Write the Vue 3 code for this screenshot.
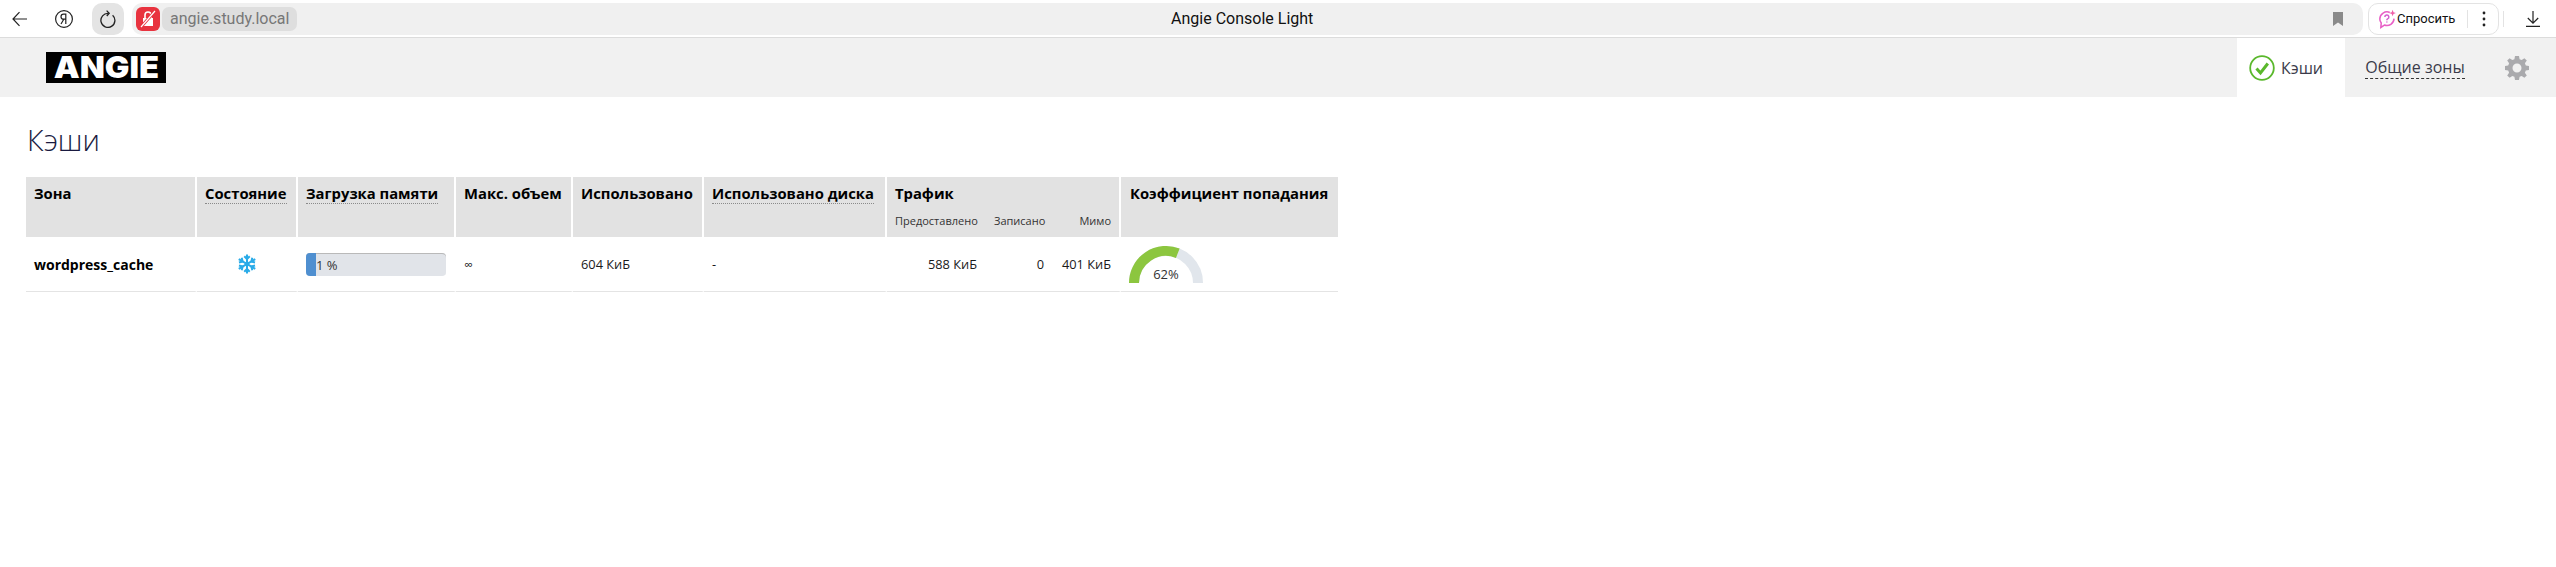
<script setup>
const hitPercent = 62;
const gaugeRadius = 32;
const angle = Math.PI * (hitPercent / 100);
const gaugeEnd = {
  x: 37 - gaugeRadius * Math.cos(angle),
  y: 37 - gaugeRadius * Math.sin(angle),
};
const gaugeFill = `M5 37 A${gaugeRadius} ${gaugeRadius} 0 0 1 ${gaugeEnd.x.toFixed(2)} ${gaugeEnd.y.toFixed(2)}`;
</script>

<template>
  <div class="browser">
    <button class="tool tool-back">
      <svg width="16" height="16" viewBox="0 0 16 16" fill="none" stroke="#222" stroke-width="1.2">
        <path d="M1 8H15M7.5 1.2L1 8l6.5 6.8" />
      </svg>
    </button>
    <button class="tool tool-ya">
      <svg width="20" height="20" viewBox="0 0 20 20" fill="none" stroke="#222" stroke-width="1.2">
        <circle cx="10" cy="10" r="8.4" />
        <path d="M11.8 15V5.2H9.6C8 5.2 7 6.2 7 7.7 7 9.2 8 10.2 9.6 10.2h2.2M9.8 10.2L7 15" />
      </svg>
    </button>
    <button class="tool tool-reload">
      <svg width="18" height="18" viewBox="0 0 18 18" fill="none" stroke="#222" stroke-width="1.3">
        <path d="M13.6 5.2A7 7 0 1 1 9.4 3.4" />
        <path d="M7.6 0.6L10.2 3.3 7.8 6" />
      </svg>
    </button>
    <div class="address">
      <span class="lock">
        <svg width="18" height="18" viewBox="0 0 18 18">
          <path d="M4 8h10v8H4z" fill="#fff" />
          <path d="M6 8V5a3 3 0 0 1 6 0v3" fill="none" stroke="#fff" stroke-width="1.6" />
          <path d="M2 17L16 1" stroke="#e8333f" stroke-width="3" />
          <path d="M2 17L16 1" stroke="#fff" stroke-width="1.2" />
        </svg>
      </span>
      <span class="url">angie.study.local</span>
      <span class="page-title">Angie Console Light</span>
      <svg class="bookmark" width="10" height="14" viewBox="0 0 10 14">
        <path d="M0 0H10V14L5 10.5 0 14Z" fill="#8a8a8a" />
      </svg>
    </div>
    <div class="ask">
      <svg width="20" height="20" viewBox="0 0 25 25" fill="none" stroke="#e85fc6" stroke-width="1.9">
        <path d="M16 4.3A9 9 0 0 0 3.5 12.4c0 2 .7 3.6 1.8 5L4.8 23l4.5-2.9A9 9 0 0 0 21.3 12" />
        <path d="M9.8 10a2.5 2.5 0 1 1 3.5 2.3c-.8.4-1 .9-1 1.7M12.3 15.5v1.5" stroke="#d55fd0" />
        <path d="M19.5 1l1.1 3 3 1.1-3 1.1-1.1 3-1.1-3-3-1.1 3-1.1z" fill="#ef5fa7" stroke="none" />
      </svg>
      <span class="ask-label">Спросить</span>
      <span class="ask-sep"></span>
      <svg width="4" height="16" viewBox="0 0 4 16" fill="#222">
        <circle cx="2" cy="2" r="1.4" />
        <circle cx="2" cy="8" r="1.4" />
        <circle cx="2" cy="14" r="1.4" />
      </svg>
    </div>
    <span class="tool-sep"></span>
    <button class="tool tool-download">
      <svg width="14" height="16" viewBox="0 0 14 16" fill="none" stroke="#222" stroke-width="1.2">
        <path d="M7 0V12M1.8 7L7 12.2 12.2 7M0 15.4H14" />
      </svg>
    </button>
  </div>

  <header class="nav">
    <div class="logo"><span>ANGIE</span></div>
    <nav class="tabs">
      <a class="tab tab-active">
        <svg width="26" height="26" viewBox="0 0 26 26" fill="none">
          <circle cx="13" cy="13" r="11.8" stroke="#5ab82c" stroke-width="1.8" />
          <path d="M7.5 13.5L11.5 18 18.8 8.5" stroke="#5ab82c" stroke-width="3" />
        </svg>
        <span>Кэши</span>
      </a>
      <a class="tab tab-zones"><span class="dashed">Общие зоны</span></a>
      <a class="tab tab-gear">
        <svg width="24" height="24" viewBox="0 0 24 24">
          <path
            fill="#aaaaad"
            fill-rule="evenodd"
            d="M10 0h4l.6 3.2 2.1.9L19.4 2.2l2.4 2.4-1.9 2.7.9 2.1L24 10v4l-3.2.6-.9 2.1 1.9 2.7-2.4 2.4-2.7-1.900-2.100.9L14 24h-4l-.6-3.200-2.100-.9-2.700 1.900-2.400-2.400 1.900-2.700-.9-2.100L0 14v-4l3.200-.6.9-2.100L2.200 4.600l2.400-2.400 2.700 1.900 2.100-.9zM12 7.500a4.500 4.500 0 1 0 0 9 4.500 4.500 0 0 0 0-9z"
          />
        </svg>
      </a>
    </nav>
  </header>

  <main class="content">
    <h1 class="title">Кэши</h1>
    <table class="caches">
      <colgroup>
        <col style="width: 171px" />
        <col style="width: 101px" />
        <col style="width: 158px" />
        <col style="width: 117px" />
        <col style="width: 131px" />
        <col style="width: 183px" />
        <col style="width: 98px" />
        <col style="width: 67px" />
        <col style="width: 69px" />
        <col style="width: 217px" />
      </colgroup>
      <thead>
        <tr class="head-main">
          <th rowspan="2"><span>Зона</span></th>
          <th rowspan="2"><span class="hint">Состояние</span></th>
          <th rowspan="2"><span class="hint">Загрузка памяти</span></th>
          <th rowspan="2"><span>Макс. объем</span></th>
          <th rowspan="2"><span>Использовано</span></th>
          <th rowspan="2"><span class="hint">Использовано диска</span></th>
          <th colspan="3" class="head-group"><span>Трафик</span></th>
          <th rowspan="2" class="last"><span>Коэффициент попадания</span></th>
        </tr>
        <tr class="head-sub">
          <th class="sub sub-first">Предоставлено</th>
          <th class="sub sub-mid">Записано</th>
          <th class="sub sub-last">Мимо</th>
        </tr>
      </thead>
      <tbody>
        <tr>
          <td class="zone">wordpress_cache</td>
          <td class="state">
            <svg width="20" height="22" viewBox="-11 -11 22 22" stroke="#29abe8" stroke-width="2.2" fill="none">
              <circle r="2.6" fill="#29abe8" stroke="none" />
              <g>
                <path d="M0 -10.5V10.5" />
                <path d="M-3 -8.5L0 -5.5 3 -8.5M-3 8.5L0 5.5 3 8.5" />
              </g>
              <g transform="rotate(60)">
                <path d="M0 -10.5V10.5" />
                <path d="M-3 -8.5L0 -5.5 3 -8.5M-3 8.5L0 5.5 3 8.5" />
              </g>
              <g transform="rotate(120)">
                <path d="M0 -10.5V10.5" />
                <path d="M-3 -8.5L0 -5.5 3 -8.5M-3 8.5L0 5.5 3 8.5" />
              </g>
            </svg>
          </td>
          <td>
            <div class="bar">
              <div class="bar-fill"></div>
              <span class="bar-label">1 %</span>
            </div>
          </td>
          <td class="inf">∞</td>
          <td>604 КиБ</td>
          <td>-</td>
          <td class="num num-first">588 КиБ</td>
          <td class="num num-mid">0</td>
          <td class="num num-last">401 КиБ</td>
          <td class="last">
            <div class="gauge">
              <svg width="74" height="37" viewBox="0 0 74 37" fill="none" stroke-width="10">
                <path d="M5 37A32 32 0 0 1 69 37" stroke="#e1e6ec" />
                <path :d="gaugeFill" stroke="#8cc63f" />
              </svg>
              <span class="gauge-label">{{ hitPercent }}%</span>
            </div>
          </td>
        </tr>
      </tbody>
    </table>
  </main>
</template>

<style>
html,
body {
  background: #fff;
}
</style>

<style scoped>
.browser {
  height: 37px;
  display: flex;
  align-items: center;
  font-family: Roboto, "Noto Sans", sans-serif;
  background: #fff;
  border-bottom: 1px solid #dcdcdc;
}

.tool {
  border: 0;
  padding: 0;
  background: none;
  display: flex;
  align-items: center;
  justify-content: center;
  height: 32px;
}

.tool-back {
  width: 16px;
  margin-left: 12px;
}

.tool-ya {
  width: 20px;
  margin-left: 26px;
}

.tool-reload {
  width: 32px;
  margin-left: 18px;
  background: #e4e4e4;
  border-radius: 10px;
}

.address {
  width: 2231px;
  height: 32px;
  margin-left: 8px;
  padding: 0 20px 0 4px;
  box-sizing: border-box;
  display: flex;
  align-items: center;
  background: #f0f0f0;
  border-radius: 10px;
}

.lock {
  width: 24px;
  height: 24px;
  background: #e8333f;
  border-radius: 6px;
  display: flex;
  align-items: center;
  justify-content: center;
}

.url {
  margin-left: 2px;
  height: 24px;
  padding: 0 8px;
  line-height: 24px;
  font-size: 16px;
  color: #777;
  background: #dedede;
  border-radius: 7px;
}

.page-title {
  flex: 1;
  text-align: center;
  font-size: 16px;
  color: #111;
  padding-right: 146px;
}

.ask {
  width: 131px;
  height: 32px;
  margin-left: 5px;
  box-sizing: border-box;
  border: 1px solid #e3e3e3;
  border-radius: 10px;
  display: flex;
  align-items: center;
  padding-left: 8px;
}

.ask-label {
  font-size: 13px;
  color: #111;
}

.ask-sep {
  width: 1px;
  height: 18px;
  margin: 0 14px 0 12px;
  background: #e3e3e3;
}

.tool-sep {
  width: 1px;
  height: 16px;
  margin-left: 4px;
  background: #e3e3e3;
}

.tool-download {
  width: 14px;
  margin-left: 22px;
}

.nav {
  height: 59px;
  display: flex;
  align-items: center;
  justify-content: space-between;
  padding-left: 46px;
  background: #f1f1f1;
  font-family: "Open Sans", sans-serif;
}

.logo {
  width: 120px;
  height: 31px;
  background: #000;
  color: #fff;
  display: flex;
  align-items: center;
  justify-content: center;
}

.logo span {
  font-family: Inter, sans-serif;
  font-weight: 900;
  font-size: 30px;
  line-height: 31px;
  transform: scaleX(1.09);
}

.tabs {
  display: flex;
  height: 100%;
}

.tab {
  display: flex;
  align-items: center;
  justify-content: center;
  box-sizing: border-box;
  font-size: 16px;
  color: #3b3b4a;
}

.tab-active {
  width: 108px;
  padding-right: 10px;
  gap: 6px;
  background: #fff;
}

.tab-zones {
  width: 140px;
}

.dashed {
  border-bottom: 1px dashed #333;
  line-height: 21px;
}

.tab-gear {
  width: 69px;
  margin-left: 2px;
  padding-right: 10px;
}

.content {
  padding: 0 26px;
  font-family: "Open Sans", sans-serif;
}

.title {
  margin: 23px 0 17px 1px;
  font-size: 29px;
  font-weight: 300;
  line-height: 40px;
  color: #1a1a40;
}

.caches {
  width: 1312px;
  table-layout: fixed;
  border-collapse: separate;
  border-spacing: 0;
  font-size: 12.8px;
  color: #1a1a1a;
}

th {
  background: #e2e2e2;
  border-right: 2px solid #fff;
  padding: 0 8px;
  text-align: left;
  vertical-align: top;
  font-size: 14.8px;
  font-weight: 700;
  color: #000;
  white-space: nowrap;
}

th.last,
td.last {
  border-right: 0;
}

.head-main {
  height: 36px;
}

.head-main th {
  padding-top: 6px;
  line-height: 20px;
}

.head-main th.last {
  padding-left: 9px;
}

.hint {
  border-bottom: 1px dotted #8a8a8a;
  display: inline-block;
  line-height: 19px;
}

.head-sub {
  height: 24px;
}

.sub {
  font-size: 11px;
  font-weight: 400;
  color: #333;
  line-height: 16px;
  padding: 0 8px;
  vertical-align: top;
  border-right: 0;
}

.sub-mid {
  padding-left: 9px;
}

.sub-last {
  text-align: right;
  border-right: 2px solid #fff;
}

td {
  height: 55px;
  padding: 0 8px;
  border-right: 2px solid #fff;
  border-bottom: 1px solid #e4e4e4;
  box-sizing: border-box;
  vertical-align: middle;
  white-space: nowrap;
}

.zone {
  font-size: 14px;
  font-weight: 700;
  color: #000;
}

.state {
  text-align: center;
  line-height: 0;
}

.bar {
  position: relative;
  width: 140px;
  height: 23px;
  background: #e1e4e9;
  border-radius: 4px;
  overflow: hidden;
  box-shadow: inset 0 1px 0 #b9b9b9;
}

.bar-fill {
  width: 10px;
  height: 100%;
  background: #4f8fd0;
}

.bar-label {
  position: absolute;
  left: 10px;
  top: 0;
  line-height: 24px;
  font-size: 13px;
  color: #333;
}

.inf {
  font-size: 12px;
}

.num {
  text-align: right;
  border-right: 0;
}

.num-last {
  border-right: 2px solid #fff;
}

.gauge {
  position: relative;
  width: 74px;
  height: 37px;
}

.gauge svg {
  display: block;
}

.gauge-label {
  position: absolute;
  left: 0;
  right: 0;
  bottom: 1px;
  text-align: center;
  font-size: 13px;
  line-height: 16px;
  color: #333;
}
</style>
